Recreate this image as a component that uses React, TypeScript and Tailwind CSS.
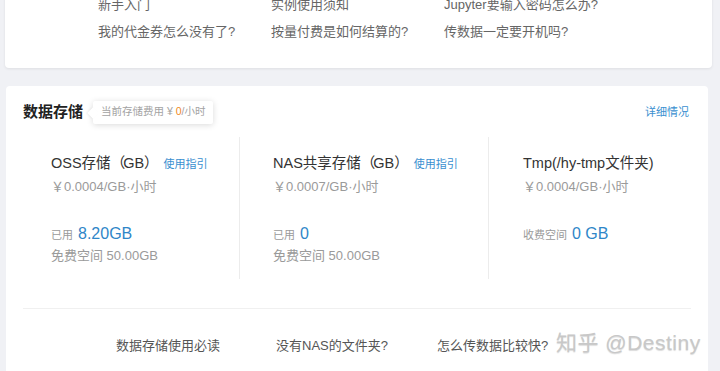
import React from 'react';

const font = { fontFamily: '"Liberation Sans", "Noto Sans CJK SC", sans-serif' };

const topLinks = [
  ['新手入门', '实例使用须知', 'Jupyter要输入密码怎么办?'],
  ['我的代金券怎么没有了?', '按量付费是如何结算的?', '传数据一定要开机吗?'],
];

const GbTitle: React.FC<{ name: string }> = ({ name }) => (
  <>
    {name}
    <span className="tracking-[-2px]">（</span>GB<span className="mr-[-3px]">）</span>
  </>
);

const StorageCol: React.FC<{
  title: React.ReactNode;
  guide?: boolean;
  price: string;
  usedLabel: string;
  used: string;
  free?: string;
  className: string;
}> = ({ title, guide, price, usedLabel, used, free, className }) => (
  <div className={className}>
    <div className="flex items-center h-[20px]">
      <span className="text-[14.5px] text-[#333] whitespace-nowrap">{title}</span>
      {guide && <span className="ml-[8px] text-[11px] text-[#3a8fd0]">使用指引</span>}
    </div>
    <div className="mt-[3px] text-[13px] text-[#9a9a9a] h-[20px] leading-[20px]">{price}</div>
    <div className="mt-[25px] flex items-baseline h-[20px]">
      <span className="text-[11px] text-[#9a9a9a]">{usedLabel}</span>
      <span className="ml-[5px] text-[16px] text-[#2f86c8]">{used}</span>
    </div>
    {free && <div className="mt-[4px] text-[13px] text-[#9a9a9a] h-[20px] leading-[20px]">{free}</div>}
  </div>
);

export default function App() {
  return (
    <div className="relative w-[720px] h-[371px] overflow-hidden bg-[#f0f1f5]" style={font}>
      {/* top help card */}
      <div className="mt-[-45px] ml-[5px] w-[707px] h-[113px] bg-white rounded-[4px] shadow-[0_1px_3px_rgba(0,0,0,0.08)] pt-[36px] pl-[93px]">
        {topLinks.map((row, i) => (
          <div key={i} className="flex h-[27px] items-center">
            {row.map((t) => (
              <span key={t} className="w-[173px] text-[13px] text-[#666]">{t}</span>
            ))}
          </div>
        ))}
      </div>

      {/* storage card */}
      <div className="mt-[18px] ml-[6px] w-[702px] h-[300px] bg-white rounded-[4px] pt-[14px] px-[17px]">
        <div className="flex items-center h-[24px]">
          <span className="text-[15px] font-bold text-[#222]">数据存储</span>
          <div className="relative ml-[10px] h-[23px] px-[8px] flex items-center bg-white rounded-[2px] shadow-[0_1px_6px_rgba(0,0,0,0.15)]">
            <span className="absolute left-[-4px] top-[8px] w-[8px] h-[8px] bg-white rotate-45 shadow-[-1px_1px_2px_rgba(0,0,0,0.06)]" />
            <span className="relative text-[10.5px] text-[#a3a3a3]">
              当前存储费用 ¥ <span className="text-[#f08a24]">0</span>/小时
            </span>
          </div>
          <span className="ml-auto mr-[2px] text-[11px] text-[#3a8fd0]">详细情况</span>
        </div>

        <div className="mt-[13px] flex h-[142px]">
          <StorageCol
            className="w-[217px] pl-[28px] pt-[17px] border-r border-[#ececec]"
            title={<GbTitle name="OSS存储" />}
            guide
            price="￥0.0004/GB·小时"
            usedLabel="已用"
            used="8.20GB"
            free="免费空间 50.00GB"
          />
          <StorageCol
            className="w-[249px] pl-[33px] pt-[17px] border-r border-[#ececec]"
            title={<GbTitle name="NAS共享存储" />}
            guide
            price="￥0.0007/GB·小时"
            usedLabel="已用"
            used="0"
            free="免费空间 50.00GB"
          />
          <StorageCol
            className="flex-1 pl-[34px] pt-[17px]"
            title="Tmp(/hy-tmp文件夹)"
            price="￥0.0004/GB·小时"
            usedLabel="收费空间"
            used="0 GB"
          />
        </div>

        <div className="mt-[29px] h-px bg-[#f0f0f0]" />

        <div className="mt-[27px] flex pl-[93px] text-[13px] text-[#555]">
          <span className="w-[160px]">数据存储使用必读</span>
          <span className="w-[161px]">没有NAS的文件夹?</span>
          <span>怎么传数据比较快?</span>
        </div>
      </div>

      {/* watermark */}
      <div className="absolute left-[556px] top-[327px] text-[21px] tracking-[0.5px] text-[#c8c8c8] [text-shadow:0_1px_1px_rgba(0,0,0,0.15)] whitespace-nowrap">
        知乎 @Destiny
      </div>
    </div>
  );
}
